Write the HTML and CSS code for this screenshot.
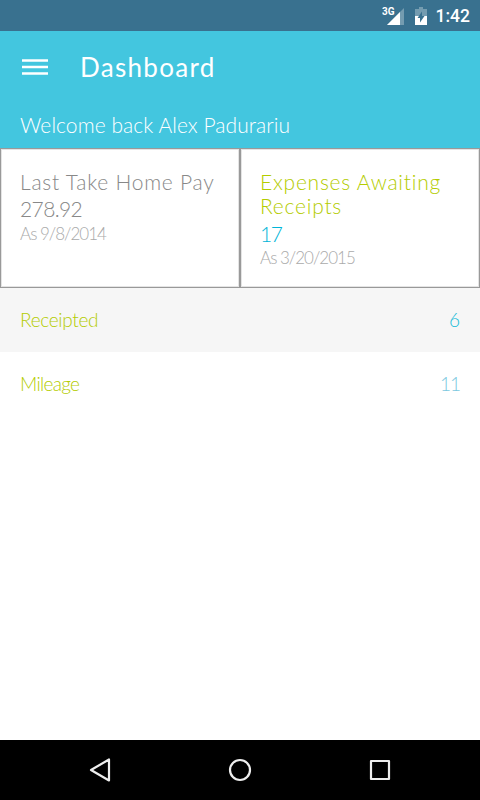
FILE: index.html
```html
<!DOCTYPE html>
<html lang="en">
<head>
<meta charset="utf-8">
<title>Dashboard</title>
<link rel="stylesheet" href="styles.css">
</head>
<body>
<div class="status">
  <svg class="signal" width="24" height="20" viewBox="0 0 24 20">
    <path d="M22 2v17H5z" fill="#fff" opacity=".3"/>
    <path d="M18 6v13H5z" fill="#fff"/>
    <text class="network" x="0" y="9">3G</text>
  </svg>
  <svg class="battery" width="12" height="18" viewBox="0 0 12 18">
    <path d="M4 0h4v2h4v7H0V2h4z" fill="#fff" opacity=".3"/>
    <path d="M0 9h12v9H0z" fill="#fff"/>
    <path d="M7 4.500L2.500 11H5v4.500L9.500 9H7z" fill="#39718f"/>
  </svg>
  <span class="clock">1:42</span>
</div>
<header class="header">
  <div class="toolbar">
    <svg class="menu" width="26" height="16" viewBox="0 0 26 16"><path d="M0 1.500h26M0 8h26M0 14.500h26" stroke="#fff" stroke-width="2.300"/></svg>
    <h1 class="title">Dashboard</h1>
  </div>
  <p class="welcome">Welcome back Alex Padurariu</p>
</header>
<section class="cards">
  <article class="card pay">
    <h2 class="card-title">Last Take Home Pay</h2>
    <p class="value">278.92</p>
    <p class="date">As 9/8/2014</p>
  </article>
  <article class="card expenses">
    <h2 class="card-title">Expenses Awaiting Receipts</h2>
    <p class="value">17</p>
    <p class="date">As 3/20/2015</p>
  </article>
</section>
<main class="list">
  <div class="row shaded"><span class="receipted">Receipted</span><span class="count">6</span></div>
  <div class="row"><span class="mileage">Mileage</span><span class="count pale">11</span></div>
</main>
<nav class="nav">
  <svg width="24" height="26" viewBox="0 0 24 26"><path d="M21 2.500v21L3 13z"/></svg>
  <svg width="24" height="26" viewBox="0 0 24 26"><circle cx="12" cy="13" r="10"/></svg>
  <svg width="24" height="26" viewBox="0 0 24 26"><path d="M3 4h18v18H3z"/></svg>
</nav>
</body>
</html>
```
FILE: styles.css
```css
* { box-sizing: border-box; }
body {
  margin: 0;
  width: 480px;
  height: 800px;
  display: flex;
  flex-direction: column;
  background: #fff;
  font-family: Lato, "Liberation Sans", sans-serif;
  font-weight: 300;
  overflow: hidden;
}
h1, h2, p { margin: 0; font-weight: 300; white-space: nowrap; }
.status {
  height: 31px;
  background: #39718f;
  display: flex;
  align-items: center;
  justify-content: flex-end;
  padding-right: 10px;
}
.signal { margin-right: 9px; }
.network { font: 700 10px Roboto, sans-serif; fill: #fff; }
.battery { margin-right: 9px; }
.clock { font: 500 17.500px/31px Roboto, sans-serif; color: #fff; padding-top: 2px; }
.header { height: 117px; background: #43c6df; color: #fff; }
.toolbar { height: 71px; display: flex; align-items: center; padding-left: 22px; }
.menu { margin-right: 32px; }
.title { font-size: 26px; font-weight: 400; letter-spacing: 1.300px; }
.welcome { padding-left: 20px; font-size: 21px; line-height: 46px; letter-spacing: 0.070px; }
.cards { height: 140px; display: grid; grid-template-columns: 1fr 1fr; }
.card { border: 1px solid #999; box-shadow: inset 0 0 0 1px #e4e4e4; padding: 21px 19px 0; }
.card-title { font-size: 21px; line-height: 24px; letter-spacing: 0.760px; white-space: normal; }
.value { font-size: 21px; line-height: 24px; margin-top: 3px; letter-spacing: -0.600px; }
.date { font-size: 17px; line-height: 24px; color: #aaa; letter-spacing: -1px; }
.pay { color: #888; }
.expenses .card-title { color: #b4cc00; }
.expenses .value { color: #00b5d8; margin-top: 4px; letter-spacing: -1.500px; }
.list { flex: 1; }
.row {
  height: 64px;
  padding: 0 20px 2px;
  display: flex;
  align-items: center;
  justify-content: space-between;
  color: #b4cc00;
  font-size: 19px;
}
.shaded { background: #f6f6f6; }
.receipted { letter-spacing: -0.300px; }
.mileage { letter-spacing: -0.700px; }
.count { color: #12bad6; }
.pale { color: #7cc8e0; letter-spacing: -1px; }
.nav { height: 60px; background: #000; display: flex; align-items: center; justify-content: center; gap: 116px; }
.nav svg { fill: none; stroke: #eee; stroke-width: 2.200; stroke-linejoin: round; }
.pay .date { margin-top: 1px; }
```
